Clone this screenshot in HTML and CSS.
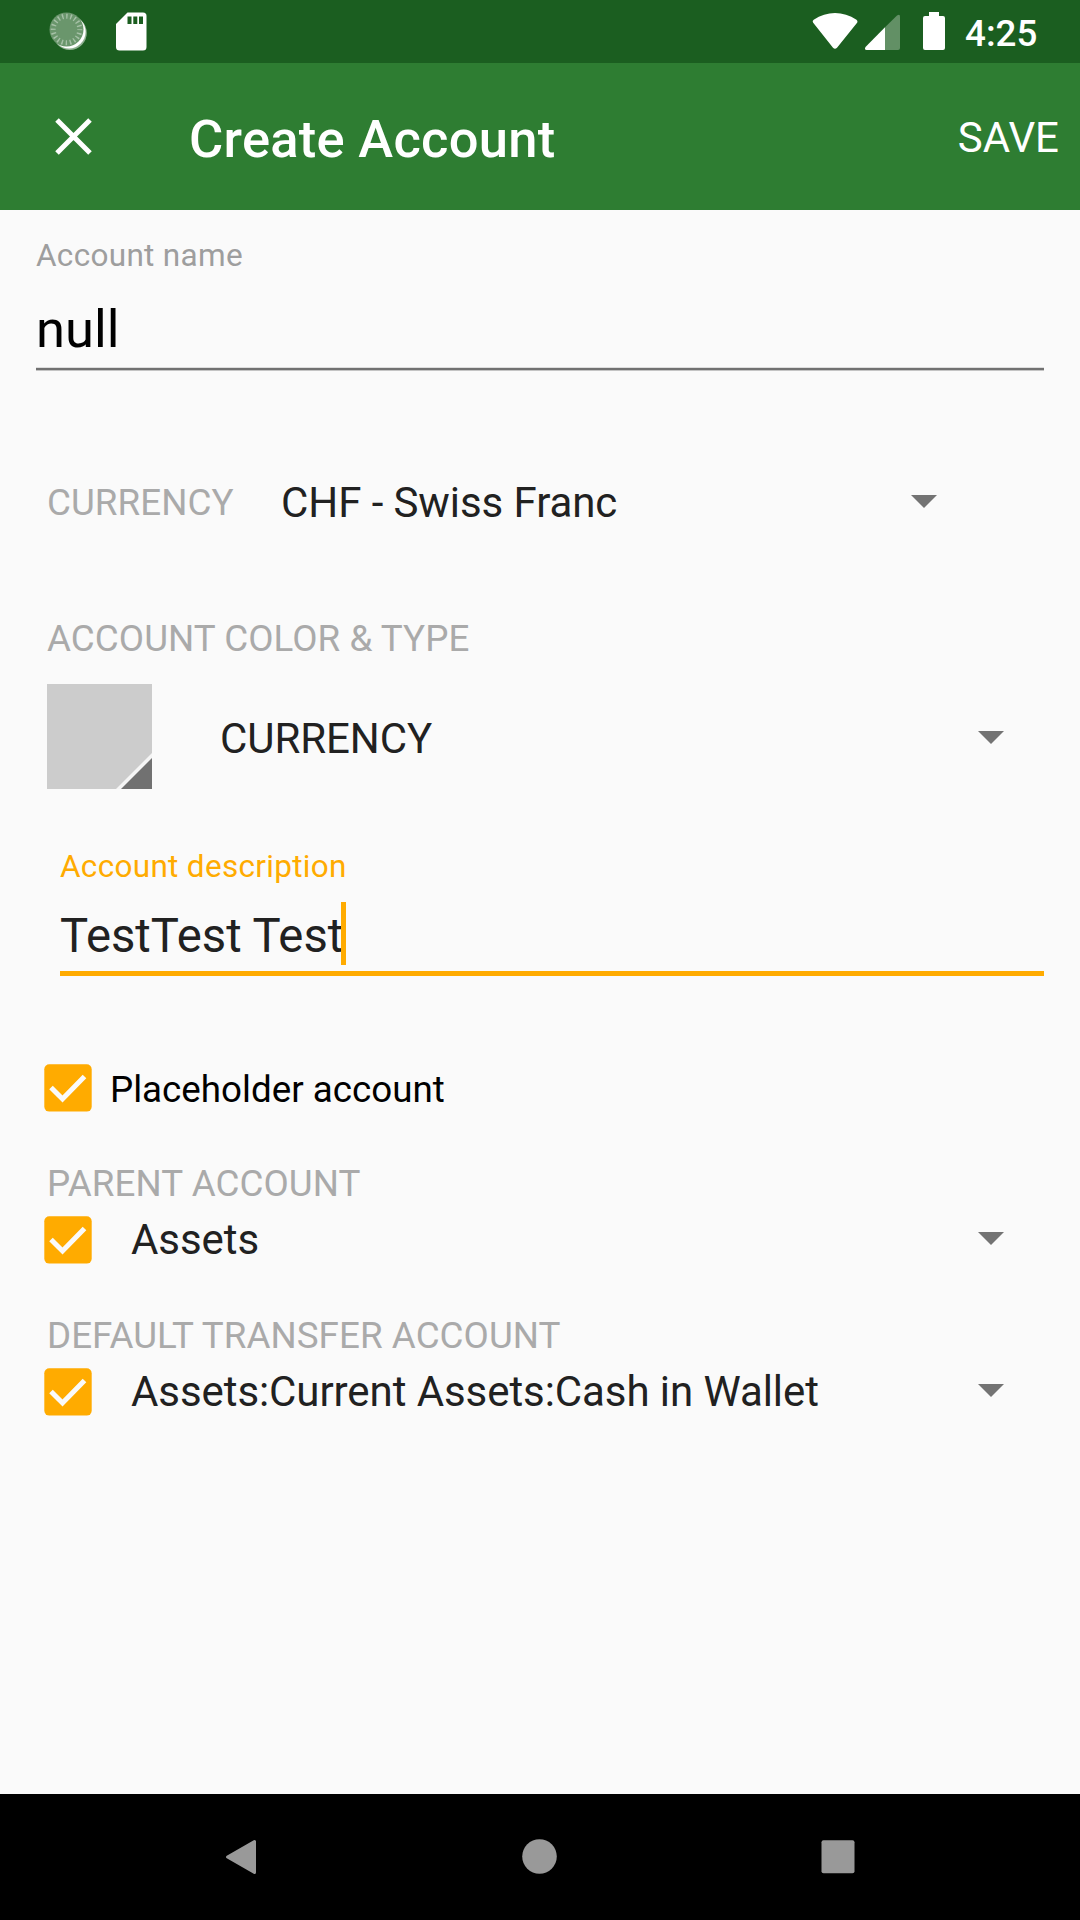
FILE: index.html
```html
<!DOCTYPE html>
<html lang="en">
<head>
<meta charset="utf-8">
<title>Create Account</title>
<link rel="stylesheet" href="styles.css">
</head>
<body>
<div class="screen">
  <header class="status-bar">
    <svg class="status-icons-left" width="160" height="63" viewBox="0 0 160 63">
      <circle cx="69.800" cy="33" r="17" fill="#8fb091"/>
      <circle cx="69" cy="31.800" r="16.600" fill="#fff"/>
      <circle cx="66.500" cy="29.500" r="17" fill="#6a966c"/>
      <circle cx="66.500" cy="29.500" r="13.300" fill="none" stroke="#a6c1a7" stroke-width="5" stroke-dasharray="1.400 2.778" stroke-dashoffset=".7"/>
      <path d="M127.500 12.500H143a3.500 3.500 0 0 1 3.500 3.500v31a3.500 3.500 0 0 1-3.500 3.500h-23.500a3.500 3.500 0 0 1-3.500-3.500V24z" fill="#fff"/>
      <path d="M127.500 16.500h4v7.500h-4zM133.300 16.500h4v7.500h-4zM139 16.500h4v7.500h-4z" fill="#1b5e20"/>
    </svg>
    <svg class="status-icons-right" width="140" height="63" viewBox="810 0 140 63">
      <path d="M813 22.500Q812 20.800 813.700 19.800C827 10.700 843 10.700 856.500 19.800Q858 20.800 857.300 22.500L837 47.700Q835 50 833 47.700z" fill="#fff"/>
      <path d="M897 15.600Q900 13.500 900 16.500V48q0 2-2 2H885V27.300z" fill="#629065"/>
      <path d="M885 27.300V50H866.500Q864 49.500 865.500 47z" fill="#fff"/>
      <path d="M929 12h10v4h4q2 0 2 2v30q0 2-2 2h-18q-2 0-2-2V18q0-2 2-2h4z" fill="#fff"/>
    </svg>
    <span class="clock">4:25</span>
  </header>

  <div class="app-bar">
    <svg class="close-icon" width="37" height="37" viewBox="0 0 37 37"><path d="M2 2L35 35M35 2L2 35" stroke="#fff" stroke-width="5"/></svg>
    <h1 class="title">Create Account</h1>
    <span class="save">SAVE</span>
  </div>

  <main class="form">
    <div class="field name-field">
      <div class="hint">Account name</div>
      <div class="name-value">null</div>
    </div>

    <div class="row currency-row">
      <span class="label currency-label">CURRENCY</span>
      <span class="value">CHF - Swiss Franc</span>
      <svg class="arrow arrow-inset" width="26" height="13" viewBox="0 0 26 13"><path d="M0 0h26L13 13z"/></svg>
    </div>

    <div class="label section-label">ACCOUNT COLOR &amp; TYPE</div>
    <div class="row type-row">
      <svg class="swatch" width="105" height="105" viewBox="0 0 105 105">
        <path d="M0 0h105v105H0z" fill="#ccc"/>
        <path d="M105 69v36H69z" fill="#f5f5f5"/>
        <path d="M105 74v31H74z" fill="#717171"/>
      </svg>
      <span class="value">CURRENCY</span>
      <svg class="arrow" width="26" height="13" viewBox="0 0 26 13"><path d="M0 0h26L13 13z"/></svg>
    </div>

    <div class="field description-field">
      <div class="hint hint-active">Account description</div>
      <div class="description-value"><span class="description-text">TestTest Test</span><i class="cursor"></i></div>
    </div>

    <div class="row placeholder-row">
      <svg class="checkbox" width="48" height="48" viewBox="0 0 48 48"><rect x=".3" y=".2" width="47.400" height="47.400" rx="5"/><path d="M7 23.500L18.500 35L40.500 12.500"/></svg>
      <span class="check-label">Placeholder account</span>
    </div>

    <div class="label section-label">PARENT ACCOUNT</div>
    <div class="row account-row">
      <svg class="checkbox" width="48" height="48" viewBox="0 0 48 48"><rect x=".3" y=".2" width="47.400" height="47.400" rx="5"/><path d="M7 23.500L18.500 35L40.500 12.500"/></svg>
      <span class="value">Assets</span>
      <svg class="arrow" width="26" height="13" viewBox="0 0 26 13"><path d="M0 0h26L13 13z"/></svg>
    </div>

    <div class="label section-label">DEFAULT TRANSFER ACCOUNT</div>
    <div class="row account-row">
      <svg class="checkbox" width="48" height="48" viewBox="0 0 48 48"><rect x=".3" y=".2" width="47.400" height="47.400" rx="5"/><path d="M7 23.500L18.500 35L40.500 12.500"/></svg>
      <span class="value">Assets:Current Assets:Cash in Wallet</span>
      <svg class="arrow" width="26" height="13" viewBox="0 0 26 13"><path d="M0 0h26L13 13z"/></svg>
    </div>
  </main>

  <nav class="nav-bar">
    <svg width="36" height="38" viewBox="0 0 36 38"><path d="M4.500 19L31.500 3.500V34.500z" fill="#999" stroke="#999" stroke-width="3" stroke-linejoin="round"/></svg>
    <svg width="36" height="38" viewBox="0 0 36 38"><circle cx="17.500" cy="18.500" r="17.300" fill="#999"/></svg>
    <svg width="36" height="38" viewBox="0 0 36 38"><rect x="1.500" y="2.300" width="33" height="33" rx="2" fill="#999"/></svg>
  </nav>
</div>
</body>
</html>
```
FILE: styles.css
```css
* { box-sizing: border-box; }

body {
  margin: 0;
  font-family: Roboto, sans-serif;
  background: #fafafa;
  color: #212121;
}

svg { display: block; flex: none; }

.screen {
  width: 1080px;
  height: 1920px;
  display: flex;
  flex-direction: column;
}

.status-bar {
  height: 63px;
  display: flex;
  background: #1b5e20;
  color: #fff;
}

.status-icons-right { margin-left: 650px; }

.clock {
  margin-left: 15px;
  font-size: 36.75px;
  font-weight: 500;
  line-height: 67px;
}

.app-bar {
  height: 147px;
  padding: 0 21px 0 55px;
  display: flex;
  align-items: center;
  background: #2e7d32;
  color: #fff;
}

.title {
  margin: 4px 0 0 97px;
  font-size: 52.5px;
  font-weight: 500;
  line-height: 62px;
  letter-spacing: 0.27px;
}

.save {
  margin: 2px 0 0 auto;
  font-size: 42px;
  line-height: 50px;
}

.form {
  flex: 1;
  padding: 26px 36px 0;
}

.hint {
  font-size: 31.5px;
  line-height: 40px;
  letter-spacing: 0.31px;
  color: #9e9e9e;
}

.hint-active { color: #ffab00; }

.name-field {
  height: 134px;
  border-bottom: 2px solid #717171;
  box-shadow: 0 1px 0 #c4c4c4, inset 0 -1px 0 #ddd;
}

.name-value {
  margin-top: 23px;
  font-size: 52.5px;
  line-height: 60px;
  color: #000;
}

.row {
  display: flex;
  align-items: center;
}

.value {
  font-size: 42px;
  line-height: 50px;
  letter-spacing: -0.075px;
  white-space: nowrap;
}

.label {
  font-size: 36.75px;
  line-height: 44px;
  letter-spacing: 0.06px;
  color: #aaa;
}

.section-label { margin-left: 11px; }

.arrow {
  margin: 0 40px 3px auto;
  fill: #737373;
}

.arrow-inset { margin-right: 107px; }

.currency-row {
  height: 60px;
  margin: 103px 0 84px;
  padding-left: 11px;
}

.currency-label { width: 234px; }

.type-row {
  height: 105px;
  margin-top: 23px;
  padding-left: 11px;
}

.type-row .value { margin: 4px 0 0 68px; }

.type-row .arrow { margin-bottom: -2px; }

.description-field {
  margin: 58px 0 0 24px;
  height: 129px;
  border-bottom: 5px solid #ffab00;
}

.description-value {
  display: flex;
  align-items: center;
  height: 63px;
  margin-top: 15px;
  font-size: 47.25px;
}

.description-text { margin: 5px -2px 0 0; }

.cursor {
  width: 5px;
  height: 63px;
  background: #ffab00;
}

.placeholder-row {
  height: 48px;
  margin: 88px 0 50px;
  padding-left: 8px;
}

.checkbox rect { fill: #ffab00; }

.checkbox path {
  fill: none;
  stroke: #fafafa;
  stroke-width: 5;
}

.check-label {
  margin: 2px 0 0 18px;
  font-size: 36.75px;
  color: #000;
}

.account-row {
  height: 48px;
  margin: 10px 0 50px;
  padding-left: 8px;
}

.account-row .value { margin-left: 39px; }

.nav-bar {
  height: 126px;
  padding: 0 224px 0 223px;
  display: flex;
  justify-content: space-between;
  align-items: center;
  background: #000;
}
```
